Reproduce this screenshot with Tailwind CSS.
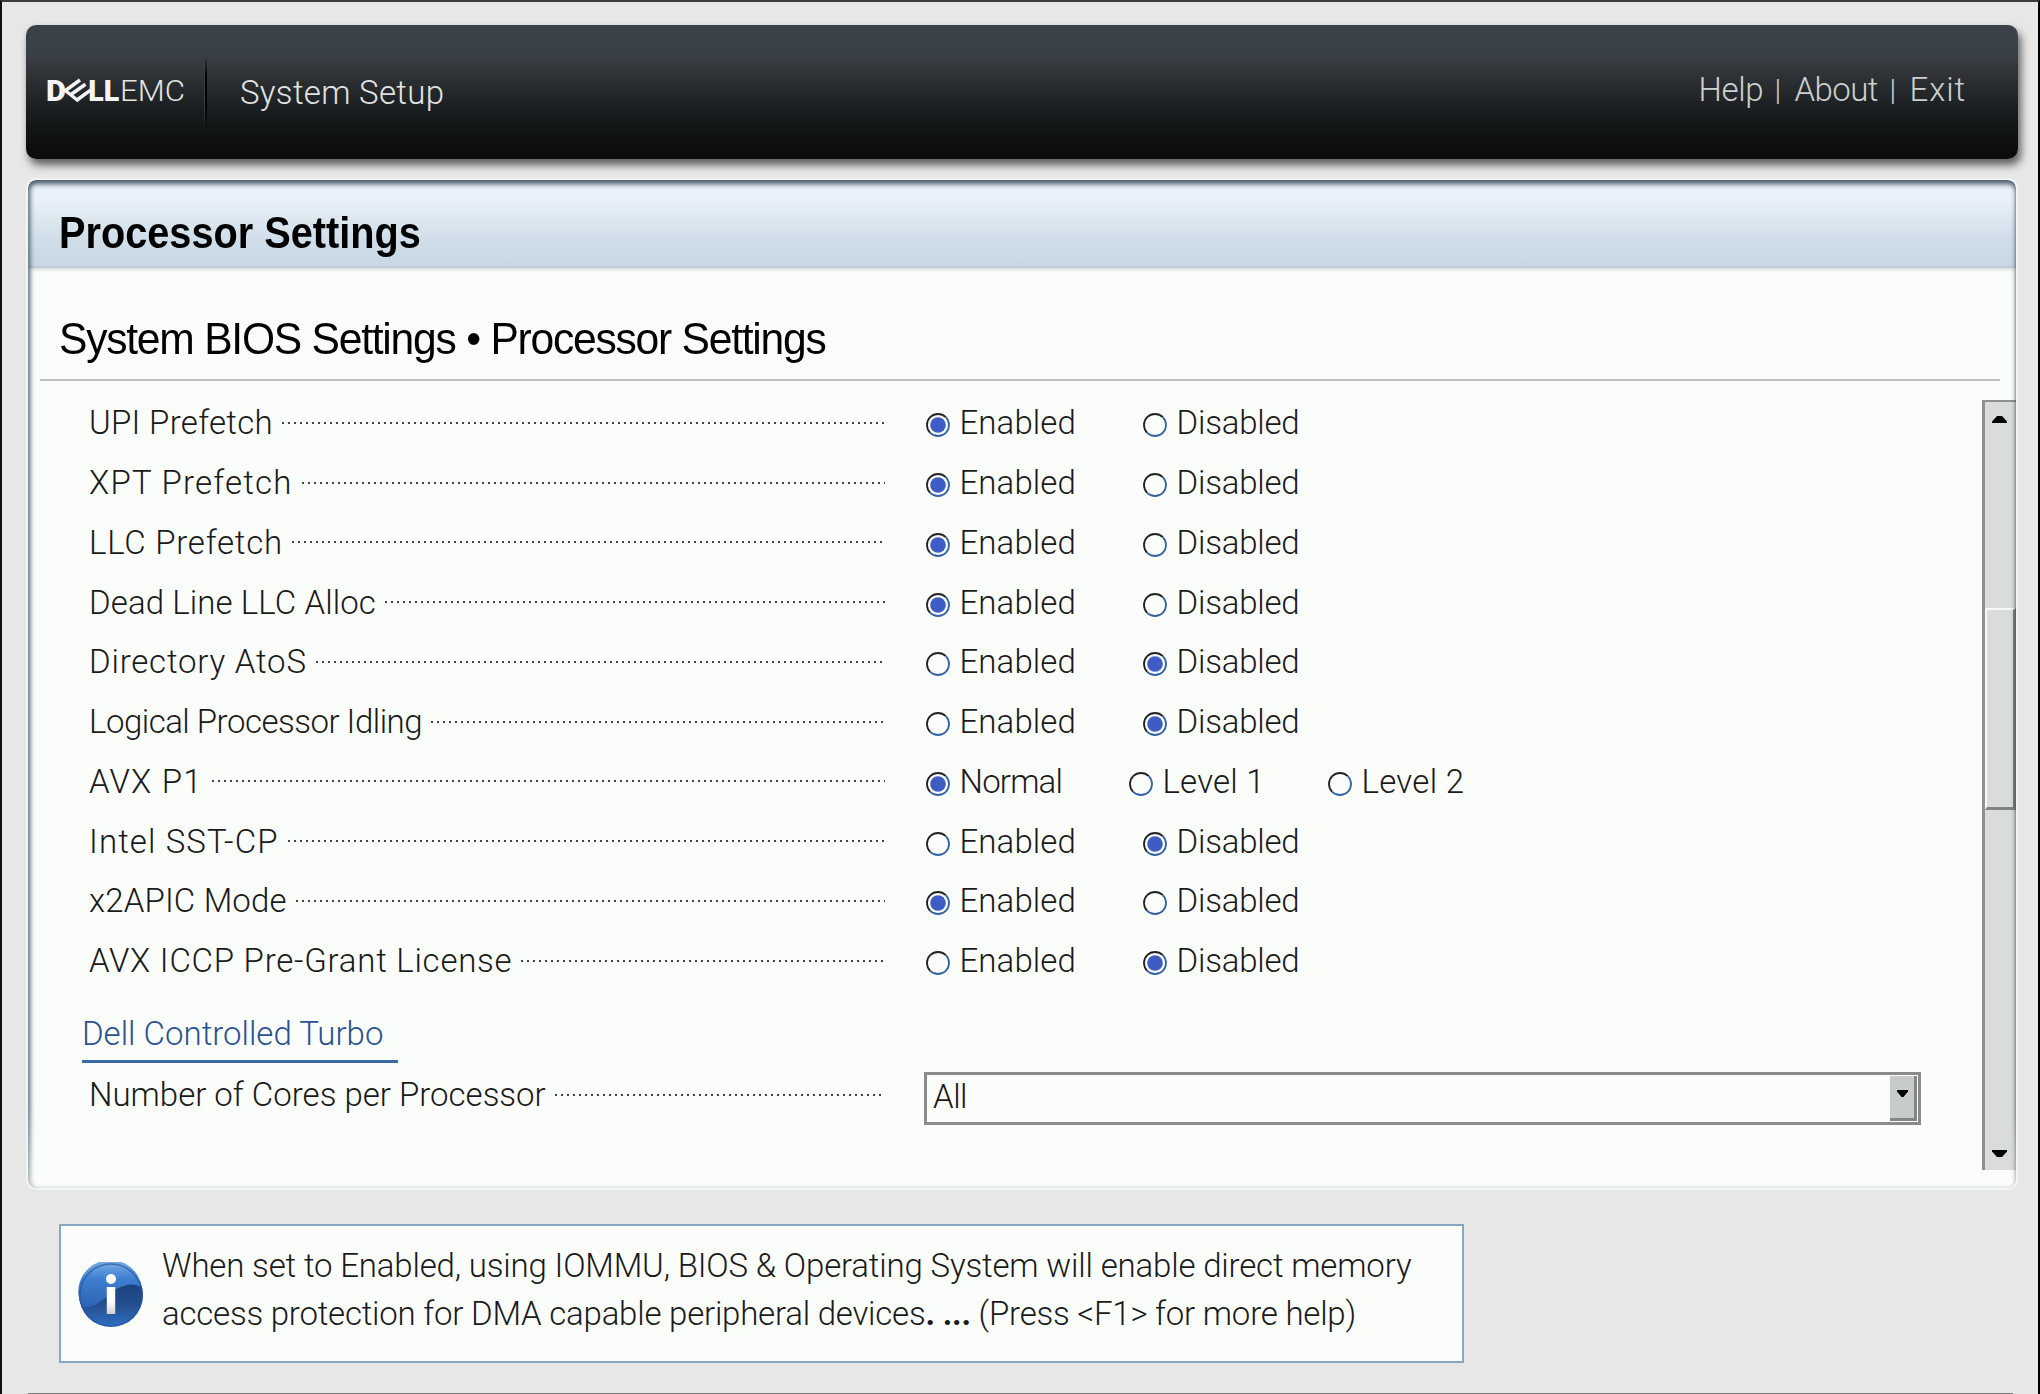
<!DOCTYPE html>
<html lang="en">
<head>
<meta charset="utf-8">
<title>System Setup</title>
<script src="https://cdn.jsdelivr.net/npm/@tailwindcss/browser@4"></script>
</head>
<body class="bg-[#e7e7e7]">
<div class="flex h-[1394px] w-[2040px] flex-col overflow-hidden border-x-2 border-t-2 border-l-[#111] border-r-black border-t-[#3f3b3d] bg-[#e7e7e7] pl-6 pr-5 pt-[23px] font-['Roboto',sans-serif] text-[33px] font-light leading-none text-[#1a1a1a]">

  <header class="flex h-[134px] shrink-0 items-center rounded-[10px] bg-[linear-gradient(#3b4149_0%,#3a4048_22%,#35393d_30%,#24282b_50%,#1b1e20_63%,#111516_78%,#0e0e0e_92%,#090c0c_100%)] shadow-[3px_6px_8px_rgba(0,0,0,0.6)]">
    <svg class="h-[60px] w-[178px] shrink-0" viewBox="26 61 178 60" fill="#f4f4f4" font-family="Roboto, sans-serif">
      <text x="46" y="100.300" font-size="29.5" font-weight="900" textLength="20" lengthAdjust="spacingAndGlyphs">D</text>
      <g transform="translate(0 -1)" stroke="#f4f4f4" stroke-width="3.5" fill="none">
        <path d="M64 89.5L78.500 101M65.500 90.500L80 80M71 94.500L85.500 84.200M77 100L90.500 90.200"/>
      </g>
      <text x="88.300" y="100.300" font-size="29.500" font-weight="900" textLength="31" lengthAdjust="spacingAndGlyphs">LL</text>
      <text x="120" y="100.300" font-size="29.500" font-weight="300" textLength="65" lengthAdjust="spacingAndGlyphs" fill="#e4e4e4">EMC</text>
    </svg>
    <div class="h-[72px] w-[3px] bg-[linear-gradient(90deg,#3a3f43_0_1px,#000_1px_3px)] [mask-image:linear-gradient(transparent,#000_30%,#000_70%,transparent)]"></div>
    <div class="ml-[33px] tracking-[0.3px] text-[#e2e4e4]">System Setup</div>
    <nav class="mb-[5px] ml-auto mr-[52px] flex items-center text-[#cdd0d0]">
      <span class="w-[76px] tracking-[-0.4px]">Help</span><span class="w-[20px] text-[30px]">|</span>
      <span class="w-[95px] tracking-[-0.6px]">About</span><span class="w-[20px] text-[30px]">|</span>
      <span class="tracking-[0.9px]">Exit</span>
    </nav>
  </header>

  <main class="relative ml-0.5 mt-[21px] flex h-[1008px] w-[1988px] shrink-0 flex-col overflow-hidden rounded-[8px] bg-[#fbfdfa] outline-2 outline-[#f3f5f3]">
    <div class="flex h-[88px] shrink-0 items-center border-b-2 border-[#c2cbdc] bg-[linear-gradient(#e9f1fa_0%,#eaf1fa_20%,#e2ebf5_36%,#dae6ee_50%,#d0deea_68%,#cbdbe4_85%,#c9d6e3_100%)] pl-[31px] pt-[18px] shadow-[0_2px_3px_rgba(0,0,0,0.12)]">
      <h1 class="origin-left scale-x-[0.882] whitespace-nowrap font-['Liberation_Sans',sans-serif] text-[45px] font-bold text-black">Processor Settings</h1>
    </div>
    <div class="ml-3 mr-4 flex h-[113px] shrink-0 items-center border-b-2 border-[#bfc1bf] pl-[19px] pt-[30px]">
      <h2 class="origin-left scale-x-[0.946] whitespace-nowrap font-['Liberation_Sans',sans-serif] text-[45px] font-normal tracking-[-1.3px] text-black">System BIOS Settings • Processor Settings</h2>
    </div>

    <div class="mt-[12px] flex flex-1">
      <div class="flex-1 pl-[61px]">
        <div id="settings"></div>
        <div class="-ml-[7px] mt-[16px] h-[56px] w-[316px] border-b-[3px] border-[#3a6ba6] leading-[53px] text-[#2a5291]">Dell Controlled Turbo</div>
        <div class="mt-[2px] flex h-[60px] items-center">
          <div class="flex w-[795px] items-center whitespace-nowrap">
            <span>Number of Cores per Processor</span>
            <i class="ml-[9px] h-[2px] flex-1 bg-[repeating-linear-gradient(90deg,#444_0_2px,transparent_2px_6px)]"></i>
          </div>
          <div class="ml-[40px] mt-[7px] flex h-[53px] w-[997px] items-center justify-between border-[3px] border-[#8b8c8a] bg-[#fbfdfa] pl-[6px] pr-[1px]">
            <span class="-mt-[3px] tracking-[-0.5px]">All</span>
            <span class="flex h-[45px] w-[27px] items-center justify-center border-b-[3px] border-r-[3px] border-[#858785] bg-[#c8ccc8]">
              <svg class="-mt-[7px] h-[7px] w-[11px]" viewBox="0 0 11 7"><path d="M0 0H11V1.500L6.500 7H4.500L0 1.500Z"/></svg>
            </span>
          </div>
        </div>
      </div>

      <div class="mt-[7px] flex h-[770px] w-[34px] flex-col items-center border-l-[3px] border-t-2 border-[#8f918f] bg-[#dadcd9]">
        <svg class="mr-[2px] mt-[14px] h-[7px] w-[15px] shrink-0" viewBox="0 0 15 7"><path d="M0 7V5.500L5 0H10L15 5.500V7Z"/></svg>
        <div class="mt-[185px] h-[202px] w-full shrink-0 border-b-[3px] border-l-2 border-r-[3px] border-t-2 border-b-[#828482] border-l-[#f6f8f5] border-r-[#828482] border-t-[#f6f8f5]"></div>
        <svg class="mb-[13px] mr-[2px] mt-auto h-[7px] w-[15px] shrink-0" viewBox="0 0 15 7"><path d="M0 0V1.500L5 7H10L15 1.500V0Z"/></svg>
      </div>
    </div>
    <div class="pointer-events-none absolute inset-0 rounded-[8px] shadow-[inset_3px_0_4px_rgba(70,95,120,0.55),inset_0_4px_5px_rgba(30,45,60,0.75),inset_-1px_0_2px_rgba(80,100,120,0.2)] [mask-image:linear-gradient(#000,#000_92%,rgba(0,0,0,0.5))]"></div>
  </main>

  <aside class="ml-[33px] mt-[36px] flex h-[139px] w-[1405px] shrink-0 items-center whitespace-nowrap border-2 border-[#86a7c1] bg-[#fbfdfa] pl-[17px]">
    <svg class="mt-[2px] h-[66px] w-[66px] shrink-0" viewBox="0 0 66 66">
      <defs>
        <linearGradient id="lo" x1="0" y1="0" x2="0" y2="1"><stop offset="0.1" stop-color="#18396f"/><stop offset="0.65" stop-color="#234f8f"/><stop offset="1" stop-color="#2f6fc4"/></linearGradient>
        <linearGradient id="hi" x1="0" y1="0" x2="0" y2="1"><stop offset="0" stop-color="#7fb0e6"/><stop offset="0.4" stop-color="#3f7fd2"/><stop offset="1" stop-color="#2b63b0"/></linearGradient>
        <linearGradient id="st" x1="0" y1="0" x2="0" y2="1"><stop offset="0.5" stop-color="#fff"/><stop offset="1" stop-color="#d2d4d2"/></linearGradient>
      </defs>
      <circle cx="33" cy="33" r="32" fill="url(#lo)"/>
      <path d="M4 45C22 48 30 28 46 24C54 21 60 23 64 26A32 32 0 1 0 4 45Z" fill="url(#hi)"/>
      <circle cx="33" cy="33" r="31" fill="none" stroke="#2456a0" stroke-width="1.500" opacity="0.7"/>
      <circle cx="33" cy="17" r="5" fill="#fff"/>
      <rect x="28.800" y="25" width="8.400" height="27" fill="url(#st)"/>
    </svg>
    <div class="-mt-[8px] ml-[18px] leading-[47.6px]">
      <div class="tracking-[-0.17px]">When set to Enabled, using IOMMU, BIOS &amp; Operating System will enable direct memory</div>
      <div class="tracking-[-0.22px]">access protection for DMA capable peripheral devices<b class="font-bold">. ...</b> (Press &lt;F1&gt; for more help)</div>
    </div>
  </aside>
  <div class="ml-0.5 mt-auto h-px w-[1985px] shrink-0 bg-[#777]"></div>
</div>

<template id="row">
  <div class="flex h-[59.75px] items-center whitespace-nowrap">
    <div class="flex w-[796px] items-center">
      <span data-label></span>
      <i class="ml-[9px] h-[2px] flex-1 bg-[repeating-linear-gradient(90deg,#444_0_2px,transparent_2px_6px)]"></i>
    </div>
    <div class="ml-[41px] flex" data-options></div>
  </div>
</template>
<template id="option">
  <div class="flex items-center">
    <svg class="mt-[5px] h-[24px] w-[24px] shrink-0" viewBox="0 0 24 24" fill="none" stroke-width="1.800">
      <path stroke="#222" d="M4.220 19.780A11 11 0 0 1 19.780 4.220"/>
      <path stroke="#3663a3" d="M19.780 4.220A11 11 0 0 1 4.220 19.780"/>
      <circle cx="12" cy="12" r="7.800" fill="#3f5cc4"/>
    </svg>
    <span class="ml-[9.5px]"></span>
  </div>
</template>
<script>
  const ED = [['Enabled', 217, 0.1], ['Disabled', 200, -0.2]];
  const LEVELS = [['Normal', 203, -0.8], ['Level 1', 199, 0.2], ['Level 2', 140, 0.3]];
  // [label, letter spacing, options, index of the selected option]
  const rows = [
    ['UPI Prefetch', 0.3, ED, 0],
    ['XPT Prefetch', 1.2, ED, 0],
    ['LLC Prefetch', 0.75, ED, 0],
    ['Dead Line LLC Alloc', 0.1, ED, 0],
    ['Directory AtoS', 0.8, ED, 1],
    ['Logical Processor Idling', -0.5, ED, 1],
    ['AVX P1', 1.2, LEVELS, 0],
    ['Intel SST-CP', 1.1, ED, 1],
    ['x2APIC Mode', 0.15, ED, 0],
    ['AVX ICCP Pre-Grant License', 0.75, ED, 1],
  ];
  for (const [label, spacing, options, selected] of rows) {
    const row = document.getElementById('row').content.cloneNode(true);
    const name = row.querySelector('[data-label]');
    name.textContent = label;
    name.style.letterSpacing = spacing + 'px';
    options.forEach(([text, width, track], i) => {
      const option = document.getElementById('option').content.cloneNode(true);
      option.querySelector('div').style.width = width + 'px';
      const span = option.querySelector('span');
      span.textContent = text;
      span.style.letterSpacing = track + 'px';
      if (i !== selected) option.querySelector('circle').remove();
      row.querySelector('[data-options]').append(option);
    });
    document.getElementById('settings').append(row);
  }
</script>
</body>
</html>
